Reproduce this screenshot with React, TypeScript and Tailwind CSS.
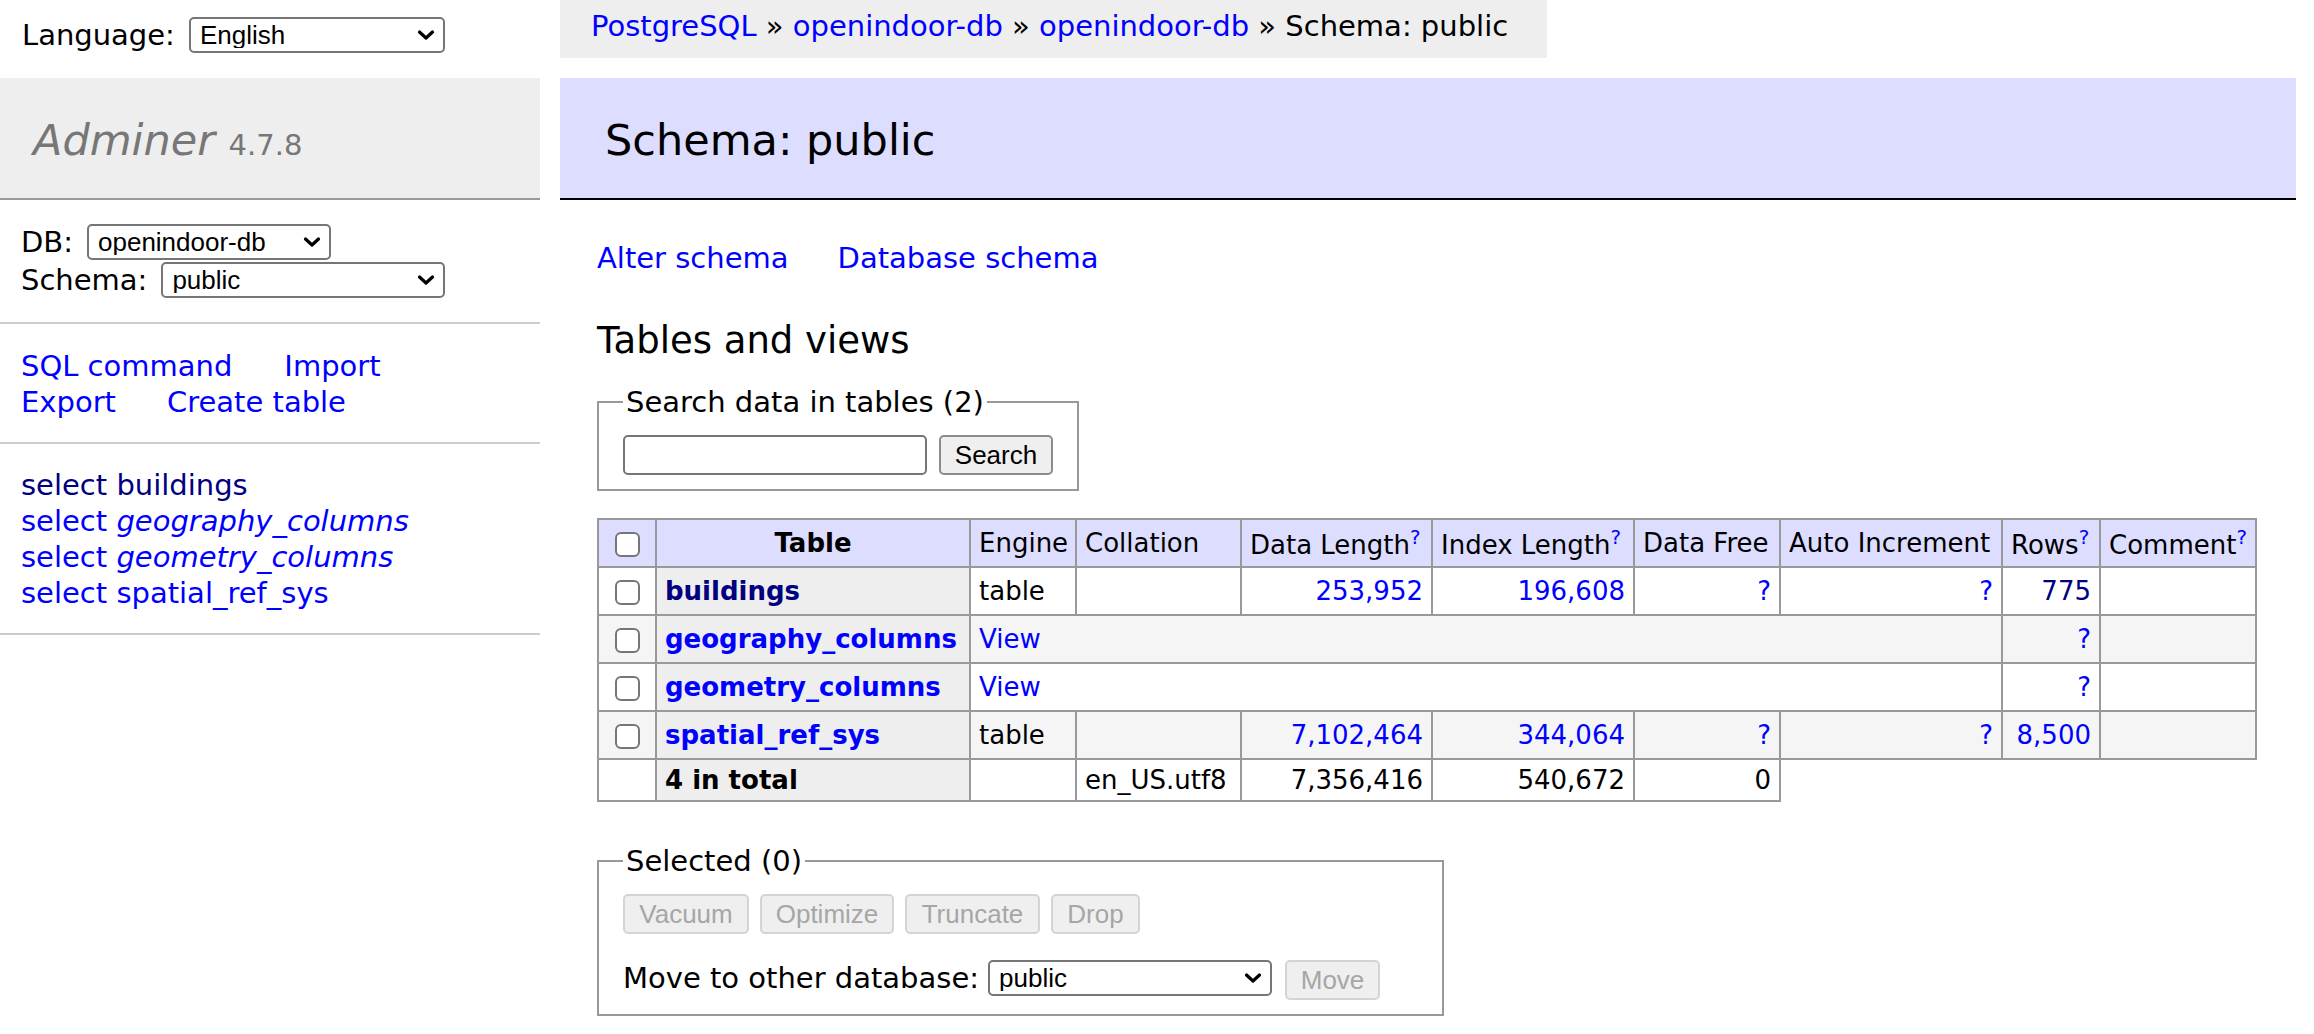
import React from "react";

const sans = "font-['DejaVu_Sans','Verdana',sans-serif]";
const ui = "font-['Liberation_Sans','Arial',sans-serif]";

function Chevron() {
  return (
    <svg
      width="18"
      height="11"
      viewBox="0 0 18 11"
      className="pointer-events-none absolute right-[10px] top-1/2 -translate-y-1/2"
    >
      <path d="M2.5 2.5 L9 8.5 L15.5 2.5" fill="none" stroke="#000" strokeWidth="3.2" strokeLinecap="round" strokeLinejoin="round" />
    </svg>
  );
}

function Select({ value, className }: { value: string; className: string }) {
  return (
    <span className={`relative block h-[36px] shrink-0 ${className}`}>
      <select
        defaultValue={value}
        className={`block h-full w-full appearance-none rounded-[5px] border-2 border-[#767676] bg-white pl-[9px] pr-[36px] text-[26px] leading-none text-black ${ui}`}
      >
        <option>{value}</option>
      </select>
      <Chevron />
    </span>
  );
}

function Check() {
  return <span className="inline-block h-[25px] w-[25px] rounded-[6px] border-2 border-[#767676] bg-white align-middle" />;
}

function Help() {
  return <sup className="static align-super text-[20px] leading-[1.25] text-[#0000ff]">?</sup>;
}

function Btn({ label, className, disabled }: { label: string; className: string; disabled?: boolean }) {
  return (
    <button
      type="button"
      className={`h-[40px] shrink-0 rounded-[5px] border-2 text-[26px] leading-none ${ui} ${
        disabled ? "border-[#d4d4d4] bg-[#efefef] text-[#a6a6a6]" : "border-[#8c8c8c] bg-[#efefef] text-black"
      } ${className}`}
    >
      {label}
    </button>
  );
}

type Row = {
  name: string;
  visited?: boolean;
  view?: boolean;
  odd: boolean;
  data?: string;
  index?: string;
  rows: string;
  rowsVisited?: boolean;
};

const ROWS: Row[] = [
  { name: "buildings", visited: true, odd: false, data: "253,952", index: "196,608", rows: "775", rowsVisited: true },
  { name: "geography_columns", view: true, odd: true, rows: "?" },
  { name: "geometry_columns", view: true, odd: false, rows: "?" },
  { name: "spatial_ref_sys", odd: true, data: "7,102,464", index: "344,064", rows: "8,500" },
];

const cell = "border-2 border-[#999] px-[8px] py-[5px]";
const tcell = "border-2 border-[#999] px-[8px] py-0";
const blue = "text-[#0000ff]";
const navy = "text-[#000080]";

export default function App() {
  return (
    <div className={`flex min-h-screen w-full bg-white text-[29px] leading-[36px] text-black ${sans}`}>
      {/* Sidebar */}
      <aside className="w-[540px] shrink-0">
        <div className="flex h-[78px] items-start gap-[14px] pl-[22px] pt-[17px]">
          <span>Language:</span>
          <Select value="English" className="w-[256px]" />
        </div>
        <h1 className="border-b-2 border-[#999] bg-[#eee] pb-[31px] pl-[33px] pt-[35px] text-[43px] leading-[54px] text-[#777]">
          <span className="italic">Adminer</span> <span className="text-[29px] leading-none">4.7.8</span>
        </h1>
        <div className="border-b-2 border-[#ccc] px-[21px] pb-[23px] pt-[23px]">
          <div className="flex h-[38px] items-center gap-[14px]">
            <span>DB:</span>
            <Select value="openindoor-db" className="w-[244px]" />
          </div>
          <div className="flex h-[38px] items-center gap-[14px]">
            <span>Schema:</span>
            <Select value="public" className="w-[284px]" />
          </div>
        </div>
        <div className={`border-b-2 border-[#ccc] px-[21px] pb-[22px] pt-[24px] ${blue}`}>
          <div className="flex gap-[52px]">
            <a>SQL command</a>
            <a>Import</a>
          </div>
          <div className="flex gap-[51px]">
            <a>Export</a>
            <a>Create table</a>
          </div>
        </div>
        <ul className="border-b-2 border-[#ccc] px-[21px] pb-[22px] pt-[23px]">
          <li className={navy}>
            <a>select</a> <a>buildings</a>
          </li>
          <li className={blue}>
            <a>select</a> <a className="italic">geography_columns</a>
          </li>
          <li className={blue}>
            <a>select</a> <a className="italic">geometry_columns</a>
          </li>
          <li className={blue}>
            <a>select</a> <a>spatial_ref_sys</a>
          </li>
        </ul>
      </aside>

      {/* Content */}
      <main className="ml-[20px] mr-[18px] flex-1">
        <div className="h-[58px] w-[987px] whitespace-nowrap bg-[#eee] pl-[31px] leading-[52px]">
          <a className={blue}>PostgreSQL</a> » <a className={blue}>openindoor-db</a> »{" "}
          <a className={blue}>openindoor-db</a> » Schema: public
        </div>

        <h2 className="mt-[20px] border-b-2 border-black bg-[#ddf] pb-[31px] pl-[45px] pt-[35px] text-[43px] leading-[54px]">
          Schema: public
        </h2>

        <div className="ml-[37px]">
          <div className={`mt-[40px] flex gap-[49px] ${blue}`}>
            <a>Alter schema</a>
            <a>Database schema</a>
          </div>

          <h3 className="mt-[41px] text-[37px] leading-[47px]">Tables and views</h3>

          <fieldset className="mt-[20px] w-fit border-2 border-[#999] px-[24px] pb-[14px] pt-[15px]">
            <legend className="px-[3px] leading-[36px]">Search data in tables (2)</legend>
            <div className="flex gap-[12px]">
              <input type="text" className="h-[40px] w-[304px] rounded-[5px] border-2 border-[#767676] bg-white" />
              <Btn label="Search" className="w-[114px]" />
            </div>
          </fieldset>

          <table className="mt-[27px] w-[1658px] table-fixed border-collapse text-[26px] leading-[32px]">
            <colgroup>
              <col className="w-[58px]" />
              <col className="w-[314px]" />
              <col className="w-[106px]" />
              <col className="w-[165px]" />
              <col className="w-[191px]" />
              <col className="w-[202px]" />
              <col className="w-[146px]" />
              <col className="w-[222px]" />
              <col className="w-[98px]" />
              <col className="w-[156px]" />
            </colgroup>
            <thead>
              <tr className="h-[48px] bg-[#ddf]">
                <td className={`${cell} text-center`}>
                  <Check />
                </td>
                <th className={`${cell} text-center font-bold`}>Table</th>
                <td className={`${cell} whitespace-nowrap`}>Engine</td>
                <td className={`${cell} whitespace-nowrap`}>Collation</td>
                <td className={`${cell} whitespace-nowrap`}>
                  Data Length
                  <Help />
                </td>
                <td className={`${cell} whitespace-nowrap`}>
                  Index Length
                  <Help />
                </td>
                <td className={`${cell} whitespace-nowrap`}>Data Free</td>
                <td className={`${cell} whitespace-nowrap`}>Auto Increment</td>
                <td className={`${cell} whitespace-nowrap`}>
                  Rows
                  <Help />
                </td>
                <td className={`${cell} whitespace-nowrap`}>
                  Comment
                  <Help />
                </td>
              </tr>
            </thead>
            <tbody>
              {ROWS.map((r) => {
                const bg = r.odd ? "bg-[#f5f5f5]" : "bg-white";
                return (
                  <tr key={r.name} className="h-[48px]">
                    <td className={`${cell} ${bg} text-center`}>
                      <Check />
                    </td>
                    <th className={`${cell} bg-[#eee] text-left font-bold whitespace-nowrap ${r.visited ? navy : blue}`}>
                      {r.name}
                    </th>
                    {r.view ? (
                      <td colSpan={6} className={`${cell} ${bg} ${blue}`}>
                        View
                      </td>
                    ) : (
                      <>
                        <td className={`${cell} ${bg}`}>table</td>
                        <td className={`${cell} ${bg}`} />
                        <td className={`${cell} ${bg} text-right ${blue}`}>{r.data}</td>
                        <td className={`${cell} ${bg} text-right ${blue}`}>{r.index}</td>
                        <td className={`${cell} ${bg} text-right ${blue}`}>?</td>
                        <td className={`${cell} ${bg} text-right ${blue}`}>?</td>
                      </>
                    )}
                    <td className={`${cell} ${bg} text-right ${r.rowsVisited ? navy : blue}`}>{r.rows}</td>
                    <td className={`${cell} ${bg}`} />
                  </tr>
                );
              })}
              <tr className="h-[42px]">
                <td className={`${tcell} bg-white`} />
                <th className={`${tcell} bg-[#eee] text-left font-bold`}>4 in total</th>
                <td className={`${tcell} bg-white`} />
                <td className={`${tcell} bg-white`}>en_US.utf8</td>
                <td className={`${tcell} bg-white text-right`}>7,356,416</td>
                <td className={`${tcell} bg-white text-right`}>540,672</td>
                <td className={`${tcell} bg-white text-right`}>0</td>
              </tr>
            </tbody>
          </table>

          <fieldset className="mt-[41px] w-[847px] border-2 border-[#999] px-[24px] pb-[14px] pt-[15px]">
            <legend className="px-[3px] leading-[36px]">Selected (0)</legend>
            <div className="flex gap-[11px]">
              <Btn label="Vacuum" className="w-[126px]" disabled />
              <Btn label="Optimize" className="w-[134px]" disabled />
              <Btn label="Truncate" className="w-[135px]" disabled />
              <Btn label="Drop" className="w-[89px]" disabled />
            </div>
            <div className="mt-[26px] flex items-start gap-[9px]">
              <span className="whitespace-nowrap leading-[36px]">Move to other database:</span>
              <Select value="public" className="w-[284px]" />
              <Btn label="Move" className="ml-[4px] w-[95px]" disabled />
            </div>
          </fieldset>
        </div>
      </main>
    </div>
  );
}
